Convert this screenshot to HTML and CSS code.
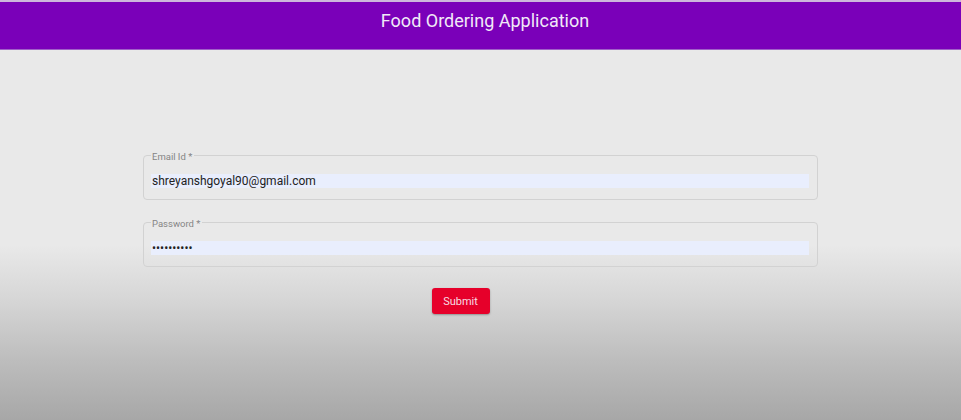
FILE: index.html
```html
<!DOCTYPE html>
<html lang="en">
<head>
<meta charset="utf-8">
<title>Food Ordering Application</title>
<link rel="stylesheet" href="styles.css">
</head>
<body>
<header class="app-header">
  <h1 class="app-title">Food Ordering Application</h1>
</header>
<main class="page">
  <form class="login-form">
    <fieldset class="field">
      <legend class="field-label">Email Id *</legend>
      <input class="field-input" type="text" value="shreyanshgoyal90@gmail.com">
    </fieldset>
    <fieldset class="field">
      <legend class="field-label">Password *</legend>
      <input class="field-input field-password" type="password" value="abcdefghij">
    </fieldset>
    <div class="actions">
      <button class="submit-btn" type="button">Submit</button>
    </div>
  </form>
</main>
</body>
</html>
```
FILE: styles.css
```css
html, body {
  margin: 0;
  padding: 0;
}
body {
  height: 420px;
  overflow: hidden;
  font-family: Roboto, "Liberation Sans", sans-serif;
  background: linear-gradient(to bottom, #e9e9e9 0, #e9e9e9 245px, #d6d6d6 300px, #bdbdbd 360px, #a7a7a7 420px);
}
.app-header {
  box-sizing: border-box;
  height: 50px;
  border-top: 2px solid #cdb6dc;
  border-bottom: 1px solid #a060c8;
  background: #7a00b9;
  display: flex;
  justify-content: center;
  align-items: flex-start;
  padding: 8px 0 0 9px;
}
.app-title {
  margin: 0;
  font-size: 18px;
  line-height: 22px;
  font-weight: 400;
  color: #f1e9f7;
}
.page {
  padding-top: 98px;
}
.login-form {
  width: 675px;
  margin: 0 auto;
  display: flex;
  flex-direction: column;
  gap: 15px;
}
.field {
  margin: 0;
  border: 1px solid #d2d2d2;
  border-radius: 4px;
  padding: 12px 8px 11px 7px;
  min-width: 0;
}
.field-label {
  padding: 4px 2px 0 1px;
  font-size: 9.5px;
  line-height: 10px;
  color: #858585;
}
.field-input {
  display: block;
  width: 100%;
  box-sizing: border-box;
  height: 14px;
  margin: 0;
  border: 0;
  padding: 0 1px;
  background: #e9eefd;
  font-family: Roboto, "Liberation Sans", sans-serif;
  font-size: 12px;
  line-height: 14px;
  color: #222;
  outline: none;
}
.field-password {
  font-size: 12px;
  letter-spacing: 0;
}
.actions {
  display: flex;
  justify-content: center;
  padding-top: 6px;
}
.submit-btn {
  margin-right: 40px;
  width: 58px;
  height: 26px;
  border: 0;
  border-radius: 3px;
  background: #e6002a;
  color: #f7dce2;
  font-family: Roboto, "Liberation Sans", sans-serif;
  font-size: 11px;
  box-shadow: 0 1px 2px rgba(0,0,0,0.3);
  padding: 0;
}
```
